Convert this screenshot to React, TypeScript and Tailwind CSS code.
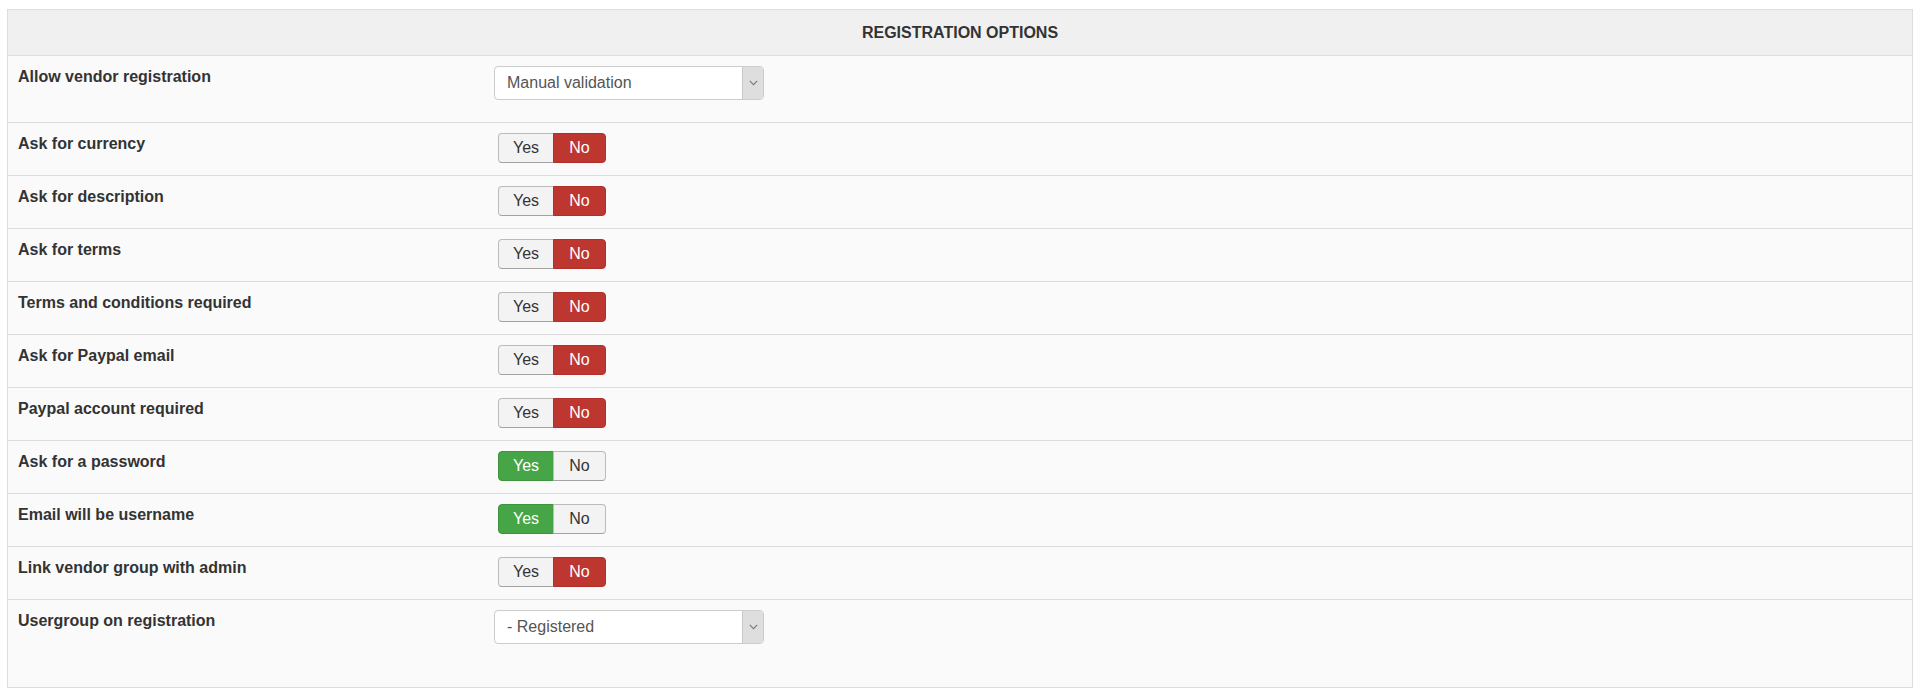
import React from "react";

type Row =
  | { label: string; kind: "toggle"; value: boolean }
  | { label: string; kind: "select"; value: string };

const rows: Row[] = [
  { label: "Allow vendor registration", kind: "select", value: "Manual validation" },
  { label: "Ask for currency", kind: "toggle", value: false },
  { label: "Ask for description", kind: "toggle", value: false },
  { label: "Ask for terms", kind: "toggle", value: false },
  { label: "Terms and conditions required", kind: "toggle", value: false },
  { label: "Ask for Paypal email", kind: "toggle", value: false },
  { label: "Paypal account required", kind: "toggle", value: false },
  { label: "Ask for a password", kind: "toggle", value: true },
  { label: "Email will be username", kind: "toggle", value: true },
  { label: "Link vendor group with admin", kind: "toggle", value: false },
  { label: "Usergroup on registration", kind: "select", value: "- Registered" },
];

function Toggle({ on }: { on: boolean }) {
  return (
    <div className="ml-[4px] flex h-[30px] text-[16px]">
      <span
        className={
          "flex w-[56px] items-center justify-center rounded-l-[4px] border " +
          (on
            ? "border-[#3c933c] bg-[#46a546] text-white"
            : "border-[#bbb] border-b-[#a2a2a2] bg-[#f3f3f3] text-[#333]")
        }
      >
        Yes
      </span>
      <span
        className={
          "-ml-px flex w-[53px] items-center justify-center rounded-r-[4px] border " +
          (on
            ? "border-[#bbb] border-b-[#a2a2a2] bg-[#f3f3f3] text-[#333]"
            : "border-[#b3302a] bg-[#bd362f] text-white")
        }
      >
        No
      </span>
    </div>
  );
}

function Select({ value }: { value: string }) {
  return (
    <div className="flex h-[34px] w-[270px] rounded-[4px] border border-[#ccc] bg-white text-[16px] text-[#555]">
      <span className="flex flex-1 items-center pl-[12px]">{value}</span>
      <span className="flex w-[21px] items-center justify-center rounded-r-[3px] border-l border-[#c8c8c8] bg-[#dedede]">
        <svg width="9" height="6" viewBox="0 0 9 6" fill="none">
          <path d="M0.8 0.8 L4.5 4.6 L8.2 0.8" stroke="#777" strokeWidth="1.1" />
        </svg>
      </span>
    </div>
  );
}

export default function App() {
  return (
    <div className="min-h-[696px] bg-white px-[7px] pt-[9px] font-['Liberation_Sans',Arial,sans-serif] text-[#333]">
      <div className="border border-[#ddd] bg-[#fafafa]">
        <div className="flex h-[46px] items-center justify-center border-b border-[#ddd] bg-[#f0f0f0] text-[16px] font-bold">
          REGISTRATION OPTIONS
        </div>
        {rows.map((row, i) => {
          const last = i === rows.length - 1;
          const h = i === 0 ? "h-[67px]" : last ? "h-[87px]" : "h-[53px]";
          return (
            <div
              key={row.label}
              className={"flex pt-[10px] " + h + (last ? "" : " border-b border-[#ddd]")}
            >
              <div className="w-[486px] shrink-0 pl-[10px] pt-[1px] text-[16px] font-bold leading-5">
                {row.label}
              </div>
              <div>
                {row.kind === "toggle" ? <Toggle on={row.value} /> : <Select value={row.value} />}
              </div>
            </div>
          );
        })}
      </div>
    </div>
  );
}
